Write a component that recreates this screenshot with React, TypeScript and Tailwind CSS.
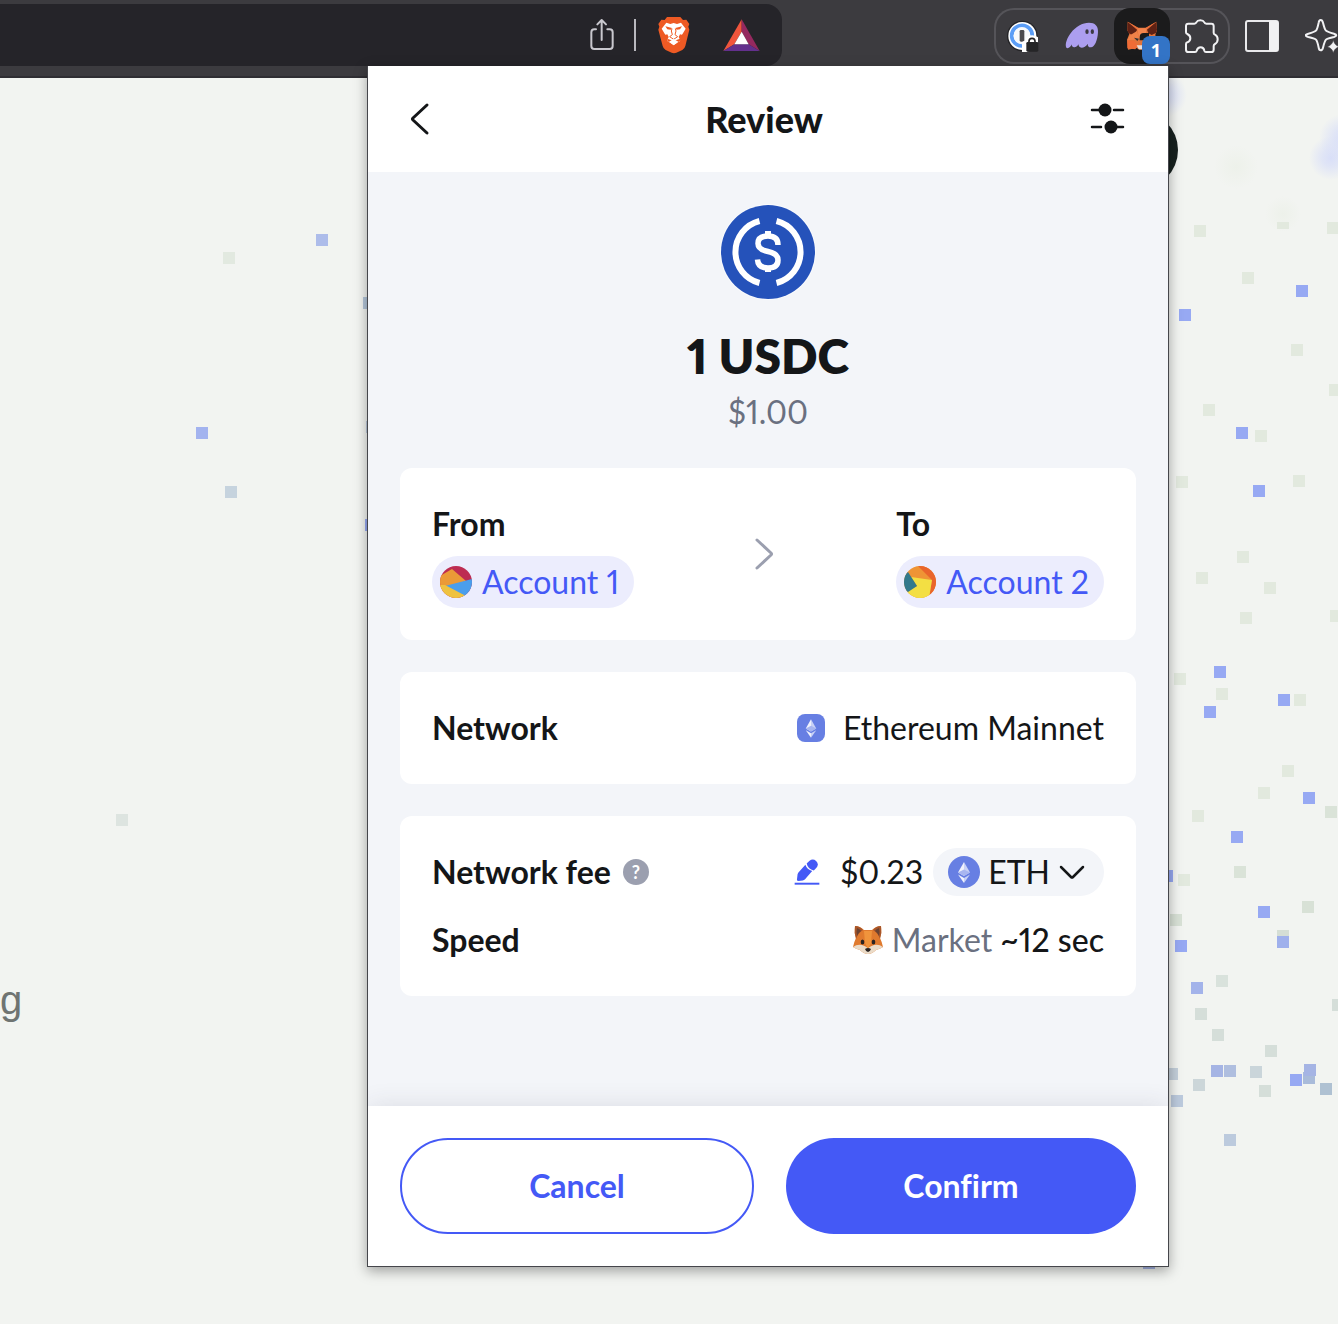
import type { ReactNode } from "react";

type Dot = [x: number, y: number, color: string];

const BLUE = "#97a9f3";
const STEEL = "#a5b4e4";
const SLATE = "#bccadd";
const SAGE = "#e2e9de";
const MOSS = "#d5ded9";

const leftDots: Dot[] = [
  [322, 240, "#adbcea"], [229, 258, "#e2e9e0"], [369, 303, "#b4c6da"], [202, 433, "#a3b3ef"],
  [231, 492, "#c6d3de"], [122, 820, "#dde4e0"], [371, 525, BLUE], [372, 427, SLATE],
];

/* x is measured from the start of the 169px strip right of the popup */
const rightDots: Dot[] = [
  [31, 231, SAGE], [79, 278, SAGE], [164, 228, SAGE], [133, 291, BLUE], [16, 315, BLUE],
  [128, 350, SAGE], [166, 390, SAGE], [40, 410, SAGE], [73, 433, BLUE], [92, 436, SAGE], [13, 482, SAGE],
  [130, 481, SAGE], [90, 491, BLUE], [74, 557, SAGE], [33, 578, SAGE], [101, 588, SAGE], [77, 618, SAGE],
  [167, 616, SAGE], [51, 672, BLUE], [11, 679, SAGE], [53, 694, SAGE], [115, 700, BLUE], [131, 700, SAGE],
  [41, 712, BLUE], [119, 771, SAGE], [95, 793, SAGE], [140, 798, BLUE], [162, 812, "#dae3d8"], [29, 816, SAGE],
  [68, 837, BLUE], [71, 872, "#dae3d8"], [-2, 876, BLUE], [15, 880, SAGE], [139, 907, "#d8e1d6"], [95, 912, BLUE],
  [7, 920, "#d8e1d6"], [114, 936, "#d5ded5"], [114, 942, "#9fb0ec"], [12, 946, BLUE], [53, 981, "#d9e2dc"],
  [28, 988, "#a3b3ea"], [32, 1014, MOSS], [169, 1005, MOSS], [49, 1035, MOSS], [102, 1051, MOSS],
  [48, 1071, STEEL], [61, 1071, "#afbedf"], [87, 1072, "#cad5da"], [3, 1074, "#c3cfda"], [30, 1085, "#ccd6d9"],
  [127, 1080, BLUE], [140, 1078, "#a9bbda"], [141, 1070, STEEL], [96, 1091, MOSS], [157, 1089, "#afc1d2"],
  [8, 1101, SLATE], [61, 1140, SLATE], [-20, 1263, STEEL],
];

function Dots({ dots }: { dots: Dot[] }) {
  return (
    <>
      {dots.map(([x, y, color]) => (
        <rect key={`${x}-${y}`} x={x - 6} y={y - 6} width="12" height="12" fill={color} />
      ))}
    </>
  );
}

function Backdrop() {
  return (
    <>
      <svg className="absolute left-0 top-0 h-[1324px] w-[380px]" viewBox="0 0 380 1324" aria-hidden="true">
        <Dots dots={leftDots} />
      </svg>
      <svg className="absolute right-0 top-0 h-[1324px] w-[169px] overflow-visible" viewBox="0 0 169 1324" aria-hidden="true">
        <defs>
          <radialGradient id="haze">
            <stop offset="0" stopColor="#d9dff8" />
            <stop offset="0.4" stopColor="#d9dff8" stopOpacity="0.7" />
            <stop offset="1" stopColor="#d9dff8" stopOpacity="0" />
          </radialGradient>
          <radialGradient id="hazeGreen">
            <stop offset="0" stopColor="#edf1ea" />
            <stop offset="1" stopColor="#edf1ea" stopOpacity="0" />
          </radialGradient>
        </defs>
        <circle cx="-4" cy="95" r="22" fill="url(#haze)" />
        <circle cx="162" cy="158" r="22" fill="url(#haze)" />
        <circle cx="174" cy="138" r="24" fill="url(#haze)" />
        <circle cx="67" cy="167" r="22" fill="url(#hazeGreen)" />
        <circle cx="114" cy="214" r="18" fill="url(#hazeGreen)" />
        <rect x="108" y="222" width="12" height="7" fill={SAGE} />
        <circle cx="-30" cy="150" r="39" fill="#17211f" />
        <Dots dots={rightDots} />
      </svg>
    </>
  );
}

function ShareIcon() {
  return (
    <svg className="h-[34px] w-[26px]" viewBox="87 54 78 102" fill="none" stroke="#c9c8ce" strokeWidth="6" strokeLinecap="round" strokeLinejoin="round" aria-hidden="true">
      <path d="M125 120V60M112 73l13-13 13 13M108 88h-5q-9 0-9 9v41q0 9 9 9h46q9 0 9-9V97q0-9-9-9h-7" />
    </svg>
  );
}

function BraveIcon() {
  return (
    <svg className="h-[38px] w-[34px]" viewBox="291 51 102 114" aria-hidden="true">
      <path d="M321 54h40l8 9 10-1 9 13-3 8 3 9-12 49q-2 8-9 12l-18 8-7 2-7-2-18-8q-7-4-9-12L295 92l3-9-3-8 9-13 10 1z" fill="#ee5a24" />
      <path d="M319 71l12 4 10-3 10 3 12-4 14 18-9 15-5 8-3 14-19 12-19-12-3-14-5-8-9-15z" fill="#fff" />
      <path d="M316 82l20 5-4 5-10-1zM366 82l-20 5 4 5 10-1z" fill="#ee5a24" />
      <path d="M336 89l-2 7 3 11-8 6 12 8 12-8-8-6 3-11-2-7" fill="none" stroke="#ee5a24" strokeWidth="3" />
      <path d="M314 108l8-2 4 8-6 12zM368 108l-8-2-4 8 6 12z" fill="#ee5a24" />
      <path d="M322 119l19 7 19-7v6l-6 5H328l-6-5z" fill="#ee5a24" />
      <path d="M341 120l14 8-14 11-14-11z" fill="#fff" />
    </svg>
  );
}

function BatIcon() {
  return (
    <svg className="h-[33px] w-[37px]" viewBox="490 57 111 99" aria-hidden="true">
      <path d="M546 58v37l-22 38-33 20z" fill="#f0553c" />
      <path d="M546 58l54 95-33-20-21-38z" fill="#95295f" />
      <path d="M491 153l33-20h43l33 20z" fill="#63308d" />
      <path d="M546 95l21 38h-43z" fill="#fff" />
    </svg>
  );
}

function PasswordIcon() {
  return (
    <svg className="h-14 w-14" viewBox="42 24 168 168" aria-hidden="true">
      <circle cx="127" cy="108" r="46" fill="#232326" />
      <circle cx="127" cy="108" r="42" fill="#fff" />
      <circle cx="126" cy="107" r="31" fill="none" stroke="#5b9df6" strokeWidth="11" />
      <circle cx="126" cy="107" r="25" fill="#f8f9fb" />
      <rect x="119" y="90" width="14" height="35" rx="4" fill="#4b4b4e" />
      <path d="M126 126l12-6v-7q18-14 36-1v31l-34 13h-14z" fill="#fff" />
      <path d="M147 128v-4q0-9 9-9t9 9v4" fill="none" stroke="#252527" strokeWidth="5" />
      <rect x="139" y="126" width="36" height="29" rx="4" fill="#252527" />
    </svg>
  );
}

function PhantomIcon() {
  return (
    <svg className="h-14 w-14" viewBox="222 24 168 168" aria-hidden="true">
      <path d="M259 143c-5-10 2-30 14-45 14-18 34-30 54-30 18 0 28 10 27 28-1 24-10 46-21 46-8 0-11-5-9-11-6 8-13 12-19 12-7 0-10-5-9-10-5 7-11 10-16 8-5-1-5-5-4-8-5 9-12 14-17 10z" fill="#ac9eef" />
      <ellipse cx="321" cy="95" rx="5" ry="7" fill="#3c3a43" />
      <ellipse cx="337" cy="95" rx="5" ry="7" fill="#3c3a43" />
    </svg>
  );
}

function MetaMaskIcon() {
  return (
    <svg className="h-14 w-14" viewBox="402 24 168 168" aria-hidden="true">
      <path d="M443 65l31 18h24l31-18 2 26-5 13 5 36-15 9-15-5-8 5h-15l-8-5-26 5-3-30 7-17-6-11z" fill="#e2733a" />
      <path d="M443 66l29 20-5 14-10 5-12-6-3-10z" fill="#5e2114" />
      <path d="M529 66l-29 20 5 14 10 5 13-6 3-10z" fill="#5e2114" />
      <path d="M443 65l38 22-9 3zM529 65l-38 22 9 3z" fill="#e8703a" />
      <path d="M472 85h28l-6 30h-17z" fill="#f4854d" />
      <path d="M450 106l21-13 7 25-36 3z" fill="#ef8148" />
      <path d="M462 113l15 3-5 7z" fill="#313133" />
      <path d="M442 122h20l12 15-8 11-24-3z" fill="#f06c36" />
      <path d="M470 136h22v12h-16z" fill="#e8ded9" />
      <path d="M479 121V111q0-12 12-12h16v22z" fill="#1b1b1c" />
    </svg>
  );
}

function PuzzleIcon() {
  return (
    <svg className="h-14 w-14" viewBox="582 24 168 168" fill="none" stroke="#f1f1f3" strokeWidth="6" strokeLinejoin="round" aria-hidden="true">
      <path d="M625 71h18q5 0 6-4 3-6 12-6t12 6q1 4 6 4h15q7 0 7 7v20q0 4 4 6 8 4 8 14t-8 14q-4 2-4 6v11q0 7-7 7h-16q-4 0-5-4-2-10-11-10t-12 10q-1 4-5 4h-20q-7 0-7-7v-17q0-4 4-5 9-3 9-12t-9-13q-4-1-4-5V78q0-7 7-7z" />
    </svg>
  );
}

function SidePanelIcon() {
  return (
    <svg className="h-8 w-[34px]" viewBox="0 0 34 32" aria-hidden="true">
      <rect x="1" y="1" width="32" height="30" rx="2" fill="none" stroke="#e9e9eb" strokeWidth="2" />
      <path d="M24 1h8q1 0 1 1v28q0 1-1 1h-8z" fill="#f1f1f3" />
    </svg>
  );
}

function SparkleIcon() {
  return (
    <svg className="h-9 w-9 shrink-0" viewBox="975 54 108 108" aria-hidden="true">
      <path d="M1022 60q5 0 7 8 5 20 9 24t24 9q7 2 7 5t-7 5q-20 4-24 8t-9 24q-2 8-7 8t-6-8q-4-20-8-24t-23-8q-8-2-8-5t8-5q19-5 23-9t8-24q1-8 6-8z" fill="none" stroke="#f1f1f3" strokeWidth="6" />
      <path d="M1060 119q3 17 19 21-16 4-19 20-3-16-19-20 16-4 19-21z" fill="#f1f1f3" stroke="#3c3b3f" strokeWidth="2" />
    </svg>
  );
}

function BrowserBar() {
  return (
    <header className="relative flex h-[78px] items-start overflow-hidden border-b-2 border-[#2f2e33] bg-[#3c3b3f]">
      <div className="mt-1 flex h-[62px] min-w-0 flex-1 items-center justify-end rounded-r-2xl bg-[#252429] pr-[22px]">
        <button type="button" aria-label="Share" className="mr-[19px]"><ShareIcon /></button>
        <span className="mr-[21px] h-8 w-0.5 bg-[#b9b8be]" />
        <button type="button" aria-label="Shields" className="mr-8"><BraveIcon /></button>
        <button type="button" aria-label="Rewards"><BatIcon /></button>
      </div>
      <div className="ml-[212px] mt-2 flex h-14 shrink-0 gap-1 rounded-[20px] inset-ring-2 inset-ring-[#555459]">
        <button type="button" aria-label="Password manager"><PasswordIcon /></button>
        <button type="button" aria-label="Phantom"><PhantomIcon /></button>
        <button type="button" aria-label="MetaMask, 1 notification" className="relative rounded-2xl bg-[#1b1b1c]">
          <MetaMaskIcon />
          <span className="absolute bottom-0 right-0 flex size-7 items-center justify-center rounded-lg bg-[#3374c6] font-['Open_Sans'] text-lg font-bold text-white">1</span>
        </button>
        <button type="button" aria-label="Extensions"><PuzzleIcon /></button>
      </div>
      <button type="button" aria-label="Side panel" className="ml-[15px] mt-5 shrink-0"><SidePanelIcon /></button>
      <button type="button" aria-label="Assistant" className="ml-[26px] mt-[18px] w-[33px] shrink-0 overflow-hidden"><SparkleIcon /></button>
    </header>
  );
}

function UsdcIcon() {
  return (
    <svg className="size-24" viewBox="0 0 96 96" aria-hidden="true">
      <circle cx="48" cy="48" r="48" fill="#fafbfd" />
      <circle cx="48" cy="48" r="47" fill="#2552ba" />
      <path d="M39.500 17A32 32 0 0 0 39.500 79M56.500 17A32 32 0 0 1 56.500 79" fill="none" stroke="#fff" strokeWidth="6" />
      <path d="M58 41q0-9-10-9t-10 7.500q0 6 10 8t10 8.500q0 8-10 8t-10.500-8.500" fill="none" stroke="#fff" strokeWidth="5.500" />
      <path d="M45 27h6v6h-6zM45 62h6v6h-6z" fill="#fff" />
    </svg>
  );
}

function EthGlyph() {
  return (
    <g>
      <path d="M16 6l-6 10.500 6 3.500z" fill="#f0f2fc" />
      <path d="M16 6l6 10.500-6 3.500z" fill="#c9d2f6" />
      <path d="M10 16.500l6-3 6 3-6 3.500z" fill="#a8b6f0" />
      <path d="M10 18.500l6 3.500v5z" fill="#f0f2fc" />
      <path d="M22 18.500L16 22v5z" fill="#c9d2f6" />
    </g>
  );
}

function FoxIcon() {
  return (
    <svg className="size-8" viewBox="0 0 32 32" aria-hidden="true">
      <path d="M3 2q5 0 9 4h8q4-4 9-4 1 7-1 12 2 4 3 9-3 2-7 3-4 4-8 4t-8-4q-4-1-7-3 1-5 3-9Q2 9 3 2z" fill="#e07a2e" />
      <path d="M3 2q5 0 8 4-5 3-7 9-2-6-1-13zM29 2q-5 0-8 4 5 3 7 9 2-6 1-13z" fill="#a8562a" />
      <path d="M5 4q3 1 4 3-3 2-4 5-1-4 0-8zM27 4q-3 1-4 3 3 2 4 5 1-4 0-8z" fill="#6b4332" />
      <path d="M1 23q4-3 9-2 3 1 6 3 3-2 6-3 5-1 9 2-3 2-7 3-4 4-8 4t-8-4q-4-1-7-3z" fill="#eadbc8" />
      <path d="M12 7h8l-1 12-3 6-3-6z" fill="#f0943c" />
      <ellipse cx="10.500" cy="18" rx="1.800" ry="2.500" fill="#2a2422" />
      <ellipse cx="21.500" cy="18" rx="1.800" ry="2.500" fill="#2a2422" />
      <path d="M13 25q3-2 6 0-1 3-3 3t-3-3z" fill="#2a2422" />
    </svg>
  );
}

function Card({ children }: { children: ReactNode }) {
  return <section className="rounded-xl bg-white p-8">{children}</section>;
}

function AccountChip({ name, children }: { name: string; children: ReactNode }) {
  return (
    <button type="button" className="flex h-[52px] items-center gap-2.5 rounded-full bg-[#ecedfd] pl-2 pr-[15px] text-[#4459f6]">
      <svg className="size-8 rounded-full" viewBox="0 0 32 32" aria-hidden="true">{children}</svg>
      {name}
    </button>
  );
}

function ReviewPopup() {
  return (
    <div
      role="dialog"
      aria-labelledby="review-title"
      className="absolute right-[169px] top-[66px] w-[802px] max-w-full border border-t-0 border-[#45464b] bg-[#f3f5f9] font-[Lato,sans-serif] text-[32px] leading-[48px] text-[#141618] proportional-nums shadow-[0_4px_12px_rgba(0,0,0,0.35)] [font-variant-ligatures:no-common-ligatures]"
    >
      <div className="grid h-[106px] grid-cols-[40px_1fr_40px] items-center bg-white pl-8 pr-10">
        <button type="button" aria-label="Back" className="flex justify-center">
          <svg className="size-10" viewBox="0 0 40 40" fill="none" stroke="#141618" strokeWidth="3" strokeLinecap="round" strokeLinejoin="round" aria-hidden="true">
            <path d="M27 6L13 19q-1 1 0 2l14 13" />
          </svg>
        </button>
        <h1 id="review-title" className="text-center text-4xl font-black">Review</h1>
        <button type="button" aria-label="Transaction settings" className="flex justify-center">
          <svg className="size-10" viewBox="0 0 40 40" fill="#141618" stroke="#141618" strokeWidth="2.500" strokeLinecap="round" aria-hidden="true">
            <path d="M4 11h8M26 11h9M4 28h9M24 28h11" />
            <circle cx="17" cy="11" r="6.500" stroke="none" />
            <circle cx="23" cy="28" r="6.500" stroke="none" />
          </svg>
        </button>
      </div>

      <div className="flex flex-col gap-8 px-8 pb-[110px] pt-8">
        <div className="flex flex-col items-center">
          <UsdcIcon />
          <h2 className="mt-6 text-5xl/[64px] font-extrabold">1 USDC</h2>
          <p className="text-[#6a7080]">$1.00</p>
        </div>

        <Card>
          <div className="flex items-center justify-between">
            <div className="flex flex-col items-start gap-2">
              <h3 className="font-bold">From</h3>
              <AccountChip name="Account 1">
                <rect width="32" height="32" fill="#bd2c52" />
                <path d="M0 10L12 3l14 12L6 21l-6 3z" fill="#eb9a37" />
                <path d="M5 20l27-7v19h-7z" fill="#4a9eec" />
                <path d="M0 19h5l21 11-6 2H0z" fill="#efc23f" />
              </AccountChip>
            </div>
            <svg className="size-10" viewBox="0 0 40 40" fill="none" stroke="#9b9faf" strokeWidth="3" strokeLinecap="round" strokeLinejoin="round" aria-hidden="true">
              <path d="M12 6l14 13q1 1 0 2L12 34" />
            </svg>
            <div className="flex flex-col items-start gap-2">
              <h3 className="font-bold">To</h3>
              <AccountChip name="Account 2">
                <rect width="32" height="32" fill="#ef9435" />
                <path d="M14 0h18v32h-7l3-18z" fill="#e9652b" />
                <path d="M7 11l21 3-3 18H3v-6l10-6z" fill="#f3df43" />
                <path d="M4 6l9 14-9 6-6-4V10z" fill="#32798c" />
              </AccountChip>
            </div>
          </div>
        </Card>

        <Card>
          <div className="flex items-center justify-between">
            <h3 className="font-bold">Network</h3>
            <p className="flex items-center gap-[18px]">
              <svg className="size-7 rounded-lg" viewBox="0 0 32 32" aria-hidden="true">
                <rect width="32" height="32" fill="#677fe3" />
                <EthGlyph />
              </svg>
              Ethereum Mainnet
            </p>
          </div>
        </Card>

        <Card>
          <div className="flex flex-col gap-5">
            <div className="flex items-center justify-between">
              <h3 className="flex items-center gap-3 font-bold">
                Network fee
                <button type="button" aria-label="About the network fee" className="flex size-[26px] items-center justify-center rounded-full bg-[#9b9faf] text-lg leading-none text-white">?</button>
              </h3>
              <div className="flex items-center">
                <button type="button" aria-label="Edit fee" className="mr-5">
                  <svg className="size-[26px]" viewBox="68 56 78 80" fill="#4459f6" aria-hidden="true">
                    <path d="M69 129h76v6H69z" />
                    <path d="M76 120l2-17q1-4 4-7l20-22q5 15 21 19l-22 25q-3 3-7 4l-13 2q-5 0-5-4z" />
                    <path d="M106 70l8-8q11-9 21 0 10 10 1 21l-8 8q-18-3-22-21z" />
                  </svg>
                </button>
                <span className="mr-2.5">$0.23</span>
                <button type="button" aria-haspopup="listbox" className="flex h-12 items-center rounded-full bg-[#f3f5f9] pl-[15px] pr-[18px]">
                  <svg className="mr-2 size-8 rounded-full" viewBox="0 0 32 32" aria-hidden="true">
                    <rect width="32" height="32" fill="#677fe3" />
                    <EthGlyph />
                  </svg>
                  ETH
                  <svg className="ml-2 size-7" viewBox="0 0 28 28" fill="none" stroke="#141618" strokeWidth="2.500" strokeLinecap="round" strokeLinejoin="round" aria-hidden="true">
                    <path d="M3 9l10 10q1 1 2 0L25 9" />
                  </svg>
                </button>
              </div>
            </div>
            <div className="flex items-center justify-between">
              <h3 className="font-bold">Speed</h3>
              <p className="flex items-center gap-2">
                <FoxIcon />
                <span className="text-[#6a7080]">Market</span>
                <span className="font-medium">~12 sec</span>
              </p>
            </div>
          </div>
        </Card>
      </div>

      <div className="flex gap-8 bg-white p-8 shadow-[0_0_24px_rgba(50,50,70,0.12)] [clip-path:inset(-32px_0_0_0)]">
        <button type="button" className="h-24 flex-1 rounded-full border-2 border-[#4459f6] font-bold text-[#4459f6]">Cancel</button>
        <button type="button" className="h-24 flex-1 rounded-full bg-[#4459f6] font-bold text-white">Confirm</button>
      </div>
    </div>
  );
}

export default function App() {
  return (
    <div className="relative min-h-screen overflow-hidden bg-[#f2f4f1]">
      <Backdrop />
      <BrowserBar />
      <main className="min-h-[1246px] pt-[898px]">
        <p className="font-['Liberation_Sans',sans-serif] text-[40px] leading-[48px] text-[#6f7472]">g</p>
      </main>
      <ReviewPopup />
    </div>
  );
}
